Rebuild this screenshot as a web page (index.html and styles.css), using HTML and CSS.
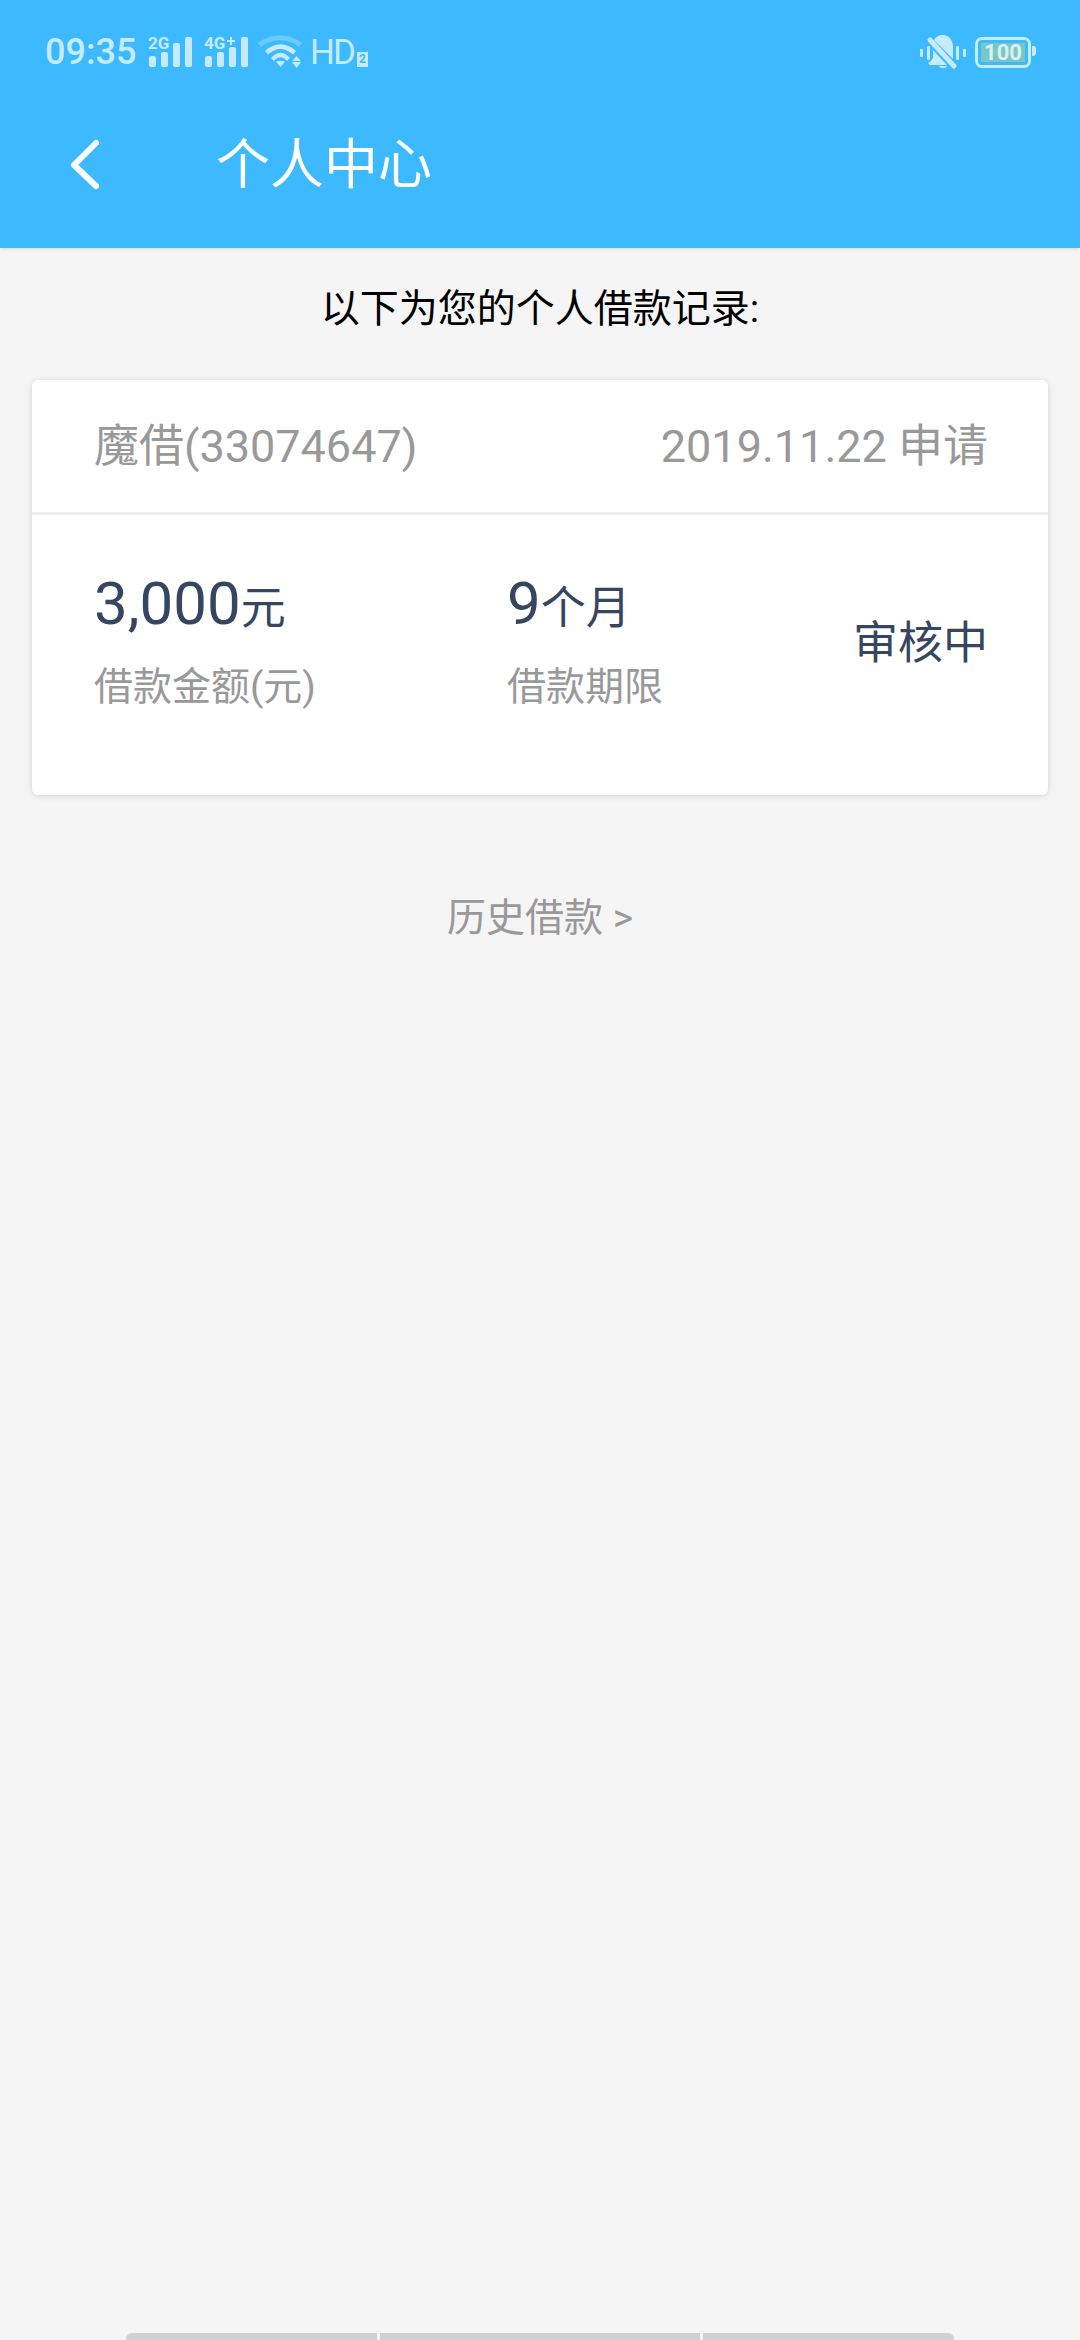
FILE: index.html
```html
<!DOCTYPE html>
<html lang="zh-CN">
  <head>
    <meta charset="UTF-8">
    <meta name="viewport" content="width=device-width, initial-scale=1.0">
    <title>个人中心</title>
    <link rel="stylesheet" href="styles.css">
  </head>
  <body>
    <header class="top">
      <div class="status">
        <span class="time">09:35</span>
        <svg class="sig" width="44" height="32" viewBox="0 0 44 32">
          <text class="net" x="0" y="13">2G</text>
          <rect x="1" y="20" width="7" height="11" rx="2"/>
          <rect x="13" y="16" width="7" height="15" rx="2"/>
          <rect x="25" y="7" width="7" height="24" rx="2"/>
          <rect x="37" y="1" width="7" height="30" rx="2"/>
        </svg>
        <svg class="sig" width="44" height="32" viewBox="0 0 44 32">
          <text class="net" x="0" y="13">4G</text>
          <path d="M23 4h3V1h2v3h3v2h-3v3h-2V6h-3z"/>
          <rect x="1" y="20" width="7" height="11" rx="2"/>
          <rect x="13" y="16" width="7" height="15" rx="2"/>
          <rect x="25" y="11" width="7" height="20" rx="2"/>
          <rect x="37" y="1" width="7" height="30" rx="2"/>
        </svg>
        <svg class="wifi" width="44" height="34" viewBox="0 0 44 34">
          <path class="dim" d="M0 8C12-2 32-2 44 8l-3 4C30 3 14 3 3 12z"/>
          <path d="M7 16c9-9 22-9 31 0l-3 3.500c-8-7.500-17-7.500-25 0z"/>
          <path d="M13 23c6-7 13-7 19 0l-3 3c-4-5-9-5-13 0z"/>
          <path d="M18 26.500q4.500-1.500 9 0L22.500 32z"/>
          <path d="M38.500 21l4.500 5h-9z"/>
          <path d="M34 27h9l-4.500 6z"/>
        </svg>
        <span class="hd">HD</span>
        <span class="hd-num">2</span>
        <span class="status-right">
          <svg class="bell" width="46" height="34" viewBox="0 0 46 34">
            <rect x="0" y="14" width="3" height="8" rx="1"/>
            <rect x="7" y="11" width="3" height="14" rx="1"/>
            <rect x="36" y="11" width="3" height="14" rx="1"/>
            <rect x="43" y="14" width="3" height="8" rx="1"/>
            <path d="M14 5c2-4 6-5 9-5 6 0 10 5 10 12v12z"/>
            <path d="M13 15l14 15H10c-2 0-2-3 0-3l3-4z"/>
            <path d="M19 31h8c-1 3-7 3-8 0z"/>
            <path class="slash" d="M10 5l24 26"/>
          </svg>
          <span class="batt"><span class="batt-fill">100</span></span>
        </span>
      </div>
      <div class="bar">
        <svg class="back" width="34" height="56" viewBox="0 0 34 56">
          <path d="M28 6L6 28l22 21"/>
        </svg>
        <h1>个人中心</h1>
      </div>
    </header>

    <p class="intro">以下为您的个人借款记录:</p>

    <section class="card">
      <div class="card-head">
        <span>魔借(33074647)</span>
        <span>2019.11.22 申请</span>
      </div>
      <div class="card-body">
        <div class="col col-amount">
          <div class="val"><b>3,000</b>元</div>
          <div class="lbl">借款金额(元)</div>
        </div>
        <div class="col col-term">
          <div class="val"><b>9</b>个月</div>
          <div class="lbl">借款期限</div>
        </div>
        <div class="state">审核中</div>
      </div>
    </section>

    <a class="history">历史借款 &gt;</a>

    <div class="nav-hint">
      <span></span>
      <span></span>
      <span></span>
    </div>
  </body>
</html>
```

FILE: styles.css
```css
:root {
  --blue: #3cb9ff;
  --status: #c5ebff;
  --grey: #999999;
  --navy: #364660;
}

* {
  box-sizing: border-box;
}

html,
body {
  margin: 0;
  height: 2340px;
}

body {
  display: flex;
  flex-direction: column;
  overflow: hidden;
  background: #f5f5f5;
  font-family: Roboto, "Noto Sans CJK SC", sans-serif;
}

.top {
  height: 248px;
  background: var(--blue);
  box-shadow: 0 1px 3px rgba(0, 0, 0, 0.12);
}

.status {
  display: flex;
  align-items: center;
  height: 104px;
  padding: 0 45px 0 45px;
  color: var(--status);
  fill: var(--status);
}

.time {
  width: 103px;
  font-size: 36px;
  font-weight: 500;
}

.sig {
  margin-right: 12px;
  overflow: visible;
}

.net {
  font-size: 17px;
  font-weight: 700;
}

.wifi {
  margin-left: -2px;
  overflow: visible;
}

.wifi .dim {
  opacity: 0.35;
}

.hd {
  margin-left: 8px;
  font-size: 35px;
  letter-spacing: -2px;
}

.hd-num {
  display: flex;
  align-items: center;
  justify-content: center;
  width: 11px;
  height: 15px;
  margin: 14px 0 0 3px;
  background: var(--status);
  color: var(--blue);
  font-size: 12px;
  font-weight: 700;
}

.status-right {
  display: flex;
  align-items: center;
  gap: 9px;
  margin-left: auto;
}

.bell {
  overflow: visible;
}

.bell .slash {
  fill: none;
  stroke: var(--status);
  stroke-width: 5px;
  stroke-linecap: round;
}

.batt {
  position: relative;
  display: flex;
  width: 56px;
  height: 31px;
  padding: 3px;
  border: 3px solid var(--status);
  border-radius: 7px;
  margin-right: 4px;
}

.batt::after {
  content: "";
  position: absolute;
  top: 6px;
  right: -8px;
  width: 4px;
  height: 10px;
  border-radius: 0 3px 3px 0;
  background: var(--status);
}

.batt-fill {
  flex: 1;
  background: #79c7c5;
  color: #d8f0ef;
  font-size: 22px;
  font-weight: 700;
  line-height: 19px;
  text-align: center;
}

.bar {
  display: flex;
  align-items: center;
  height: 122px;
  padding-left: 68px;
  margin-top: -2px;
}

.back {
  margin-top: 3px;
  fill: none;
  stroke: #ffffff;
  stroke-width: 6px;
  stroke-linecap: round;
  stroke-linejoin: round;
}

h1 {
  margin: 0 0 6px 114px;
  color: #ffffff;
  font-size: 54px;
  font-weight: 400;
}

.intro {
  margin: 37px 0 0;
  color: #000000;
  font-size: 39px;
  line-height: 48px;
  text-align: center;
}

.card {
  margin: 47px 32px 0;
  height: 415px;
  background: #ffffff;
  border-radius: 6px;
  box-shadow: 0 1px 6px rgba(0, 0, 0, 0.14);
}

.card-head {
  display: flex;
  align-items: center;
  justify-content: space-between;
  height: 135px;
  padding: 0 60px 8px 62px;
  border-bottom: 3px solid #efefef;
  color: var(--grey);
  font-size: 45px;
}

.card-body {
  position: relative;
  display: flex;
  align-items: center;
  height: 280px;
  padding: 0 60px 31px 62px;
}

.col-amount {
  width: 413px;
}

.val {
  color: var(--navy);
  font-size: 45px;
  line-height: 70px;
}

.val b {
  font-size: 60px;
  font-weight: 400;
}

.lbl {
  margin-top: 19px;
  color: var(--grey);
  font-size: 39px;
  line-height: 48px;
}

.state {
  margin-left: auto;
  color: var(--navy);
  font-size: 45px;
}

.history {
  margin-top: 97px;
  color: var(--grey);
  font-size: 39px;
  line-height: 52px;
  text-align: center;
}

.nav-hint {
  display: flex;
  gap: 3px;
  width: 828px;
  height: 7px;
  margin: auto 0 0 126px;
}

.nav-hint span {
  flex: 252;
  background: #d0d0d0;
}

.nav-hint span:first-child {
  border-top-left-radius: 6px;
}

.nav-hint span:nth-child(2) {
  flex: 320;
}

.nav-hint span:last-child {
  border-top-right-radius: 6px;
}
```
